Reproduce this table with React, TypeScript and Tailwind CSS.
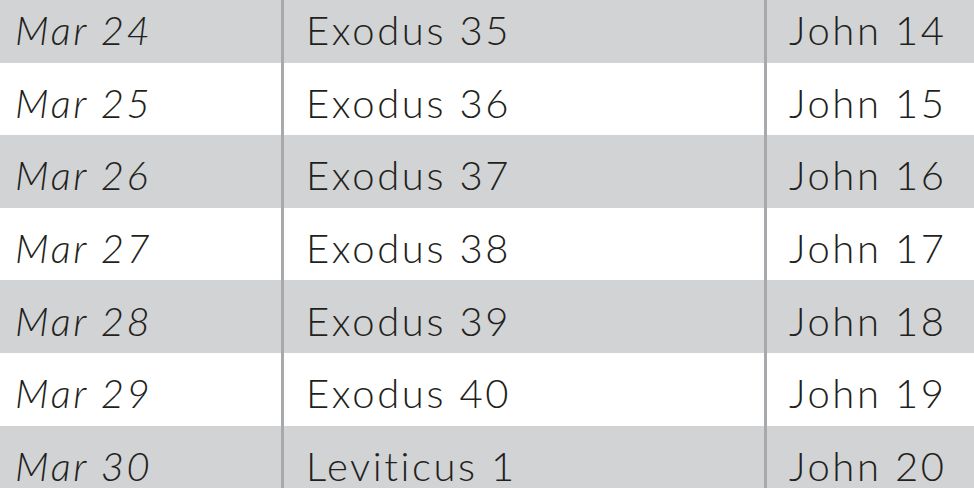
const rows = [
  ["Mar 24", "Exodus 35", "John 14"],
  ["Mar 25", "Exodus 36", "John 15"],
  ["Mar 26", "Exodus 37", "John 16"],
  ["Mar 27", "Exodus 38", "John 17"],
  ["Mar 28", "Exodus 39", "John 18"],
  ["Mar 29", "Exodus 40", "John 19"],
  ["Mar 30", "Leviticus 1", "John 20"],
];

export default function App() {
  return (
    <div className="w-[974px] h-[488px] overflow-hidden bg-white">
      <div className="-mt-[10px] font-['Lato',sans-serif] font-light text-[40px] tracking-[2.6px] text-[#231f20] [font-variant-ligatures:none]">
        {rows.map((r, i) => (
          <div
            key={r[0]}
            className={`grid grid-cols-[281px_3px_480px_3px_1fr] h-[72.6px] ${i % 2 === 0 ? "bg-[#d1d3d4]" : "bg-white"}`}
          >
            <div className="pl-[15px] pt-[8px] flex items-center italic">{r[0]}</div>
            <div className="bg-[#a7a9ac]" />
            <div className="pl-[22px] pt-[8px] flex items-center">{r[1]}</div>
            <div className="bg-[#a7a9ac]" />
            <div className="pl-[22px] pt-[8px] flex items-center">{r[2]}</div>
          </div>
        ))}
      </div>
    </div>
  );
}
